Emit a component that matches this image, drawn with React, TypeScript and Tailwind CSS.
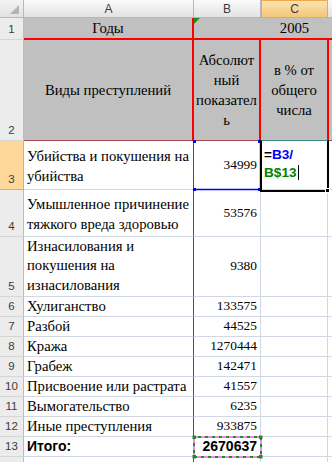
import React from "react";

const serif = "font-['Liberation_Serif','Times_New_Roman',serif]";
const sans = "font-['Liberation_Sans',Arial,sans-serif]";

const grid = "border-r border-b border-r-[#d0d7e5] border-b-[#d0d7e5]";
const rowHead =
  "flex items-end justify-center pb-[2px] bg-[#ececec] border-r border-b border-r-[#bcbcbc] border-b-[#d6d6d6] text-[11.5px] leading-[16px] text-[#3c3c3c] font-['Liberation_Sans',Arial,sans-serif]";
const colHead =
  "flex items-center justify-center bg-gradient-to-b from-[#fafafa] to-[#e3e3e3] border-r border-b border-r-[#b7b7b7] border-b-[#b7b7b7] text-[12px] text-[#3c3c3c] font-['Liberation_Sans',Arial,sans-serif]";

const simple = [
  { n: 6, a: "Хулиганство", b: "133575" },
  { n: 7, a: "Разбой", b: "44525" },
  { n: 8, a: "Кража", b: "1270444" },
  { n: 9, a: "Грабеж", b: "142471" },
  { n: 10, a: "Присвоение или растрата", b: "41557" },
  { n: 11, a: "Вымогательство", b: "6235" },
  { n: 12, a: "Иные преступления", b: "933875" },
];

export default function App() {
  return (
    <div className="relative w-[332px] h-[462px] overflow-hidden bg-white">
      <div className="grid grid-cols-[24px_170px_67px_67px_1fr] grid-rows-[18px_22px_101px_49px_47px_60px_repeat(8,20px)_1fr] h-full text-black">
        {/* column headers */}
        <div className="relative bg-gradient-to-b from-[#f4f4f4] to-[#e2e2e2] border-r border-b border-[#b7b7b7]">
          <svg className="absolute right-[4px] bottom-[3px]" width="9" height="9" viewBox="0 0 9 9">
            <polygon points="9,0 9,9 0,9" fill="#b4b4b4" />
          </svg>
        </div>
        <div className={colHead}>A</div>
        <div className={colHead}>B</div>
        <div className="flex items-center justify-center bg-gradient-to-b from-[#fbe3b4] to-[#f4c673] border border-[#f0a848] text-[12px] text-[#3c3c3c] font-['Liberation_Sans',Arial,sans-serif]">
          C
        </div>
        <div className="bg-gradient-to-b from-[#fafafa] to-[#e3e3e3] border-b border-[#b7b7b7]" />

        {/* row 1 */}
        <div className={rowHead}>1</div>
        <div className={`flex items-center justify-center bg-[#c0c0c0] border-r-2 border-b-2 border-[#ff0000] text-[14.7px] ${serif}`}>
          Годы
        </div>
        <div className="relative bg-[#c0c0c0] border-b-2 border-[#ff0000]">
          <svg className="absolute left-0 top-0" width="6" height="6" viewBox="0 0 6 6">
            <polygon points="0,0 6,0 0,6" fill="#1e8c1e" />
          </svg>
        </div>
        <div className={`flex items-center justify-center bg-[#c0c0c0] border-b-2 border-[#ff0000] text-[14.7px] ${serif}`}>
          2005
        </div>
        <div className="bg-[#c0c0c0] border-b-2 border-[#ff0000]" />

        {/* row 2 */}
        <div className={rowHead}>2</div>
        <div className={`flex items-center justify-center bg-[#c0c0c0] border-r-2 border-r-[#ff0000] border-b border-b-[#a84848] text-[14.7px] ${serif}`}>
          Виды преступлений
        </div>
        <div className={`flex items-center justify-center text-center bg-[#c0c0c0] border-r-2 border-r-[#ff0000] border-b border-b-[#a84848] text-[14.7px] leading-[20px] ${serif}`}>
          <span>
            Абсолют
            <br />
            ный
            <br />
            показател
            <br />ь
          </span>
        </div>
        <div className={`flex items-center justify-center text-center bg-[#c0c0c0] border-r border-r-[#ff0000] border-b border-b-[#a84848] text-[14.7px] leading-[20px] ${serif}`}>
          <span>
            в % от
            <br />
            общего
            <br />
            числа
          </span>
        </div>
        <div className="bg-[#c0c0c0] border-l border-l-[#ff0000] border-b border-b-[#a84848]" />

        {/* row 3 */}
        <div className="flex items-end justify-center pb-[2px] bg-[#fdd89a] border-r border-b border-[#f0a848] text-[11.5px] leading-[16px] text-[#3c3c3c] font-['Liberation_Sans',Arial,sans-serif]">
          3
        </div>
        <div className={`flex items-end pl-[3px] pb-[3px] border-r border-r-[#555] border-b border-b-[#d0d7e5] text-[14.7px] leading-[20px] whitespace-nowrap ${serif}`}>
          <span>
            Убийства и покушения на
            <br />
            убийства
          </span>
        </div>
        <div className={`flex items-center justify-end pr-[3px] ${grid} text-[13.4px] ${serif}`}>34999</div>
        <div className={`pl-[3px] pt-[5px] ${grid} text-[13.6px] leading-[18px] font-bold ${sans}`}>
          <span>=</span>
          <span className="text-[#0000ff]">B3/</span>
          <br />
          <span className="text-[#008000]">B$13</span>
          <span className="inline-block w-px h-[15px] bg-black align-[-3px] ml-[1px]" />
        </div>
        <div className="border-b border-[#d0d7e5]" />

        {/* row 4 */}
        <div className={rowHead}>4</div>
        <div className={`flex flex-col justify-end pl-[3px] pr-[4px] pb-[2px] border-r border-r-[#555] border-b border-b-[#d0d7e5] text-[14.7px] leading-[20px] whitespace-nowrap ${serif}`}>
          <div className="flex justify-between">
            <span>Умышленное</span>
            <span>причинение</span>
          </div>
          <div>тяжкого вреда здоровью</div>
        </div>
        <div className={`flex items-center justify-end pr-[3px] ${grid} text-[13.4px] ${serif}`}>53576</div>
        <div className={grid} />
        <div className="border-b border-[#d0d7e5]" />

        {/* row 5 */}
        <div className={rowHead}>5</div>
        <div className={`flex items-end pl-[3px] pb-[1px] border-r border-r-[#555] border-b border-b-[#d0d7e5] text-[14.7px] leading-[19.5px] whitespace-nowrap ${serif}`}>
          <span>
            Изнасилования и
            <br />
            покушения на
            <br />
            изнасилования
          </span>
        </div>
        <div className={`flex items-center justify-end pr-[3px] ${grid} text-[13.4px] ${serif}`}>9380</div>
        <div className={grid} />
        <div className="border-b border-[#d0d7e5]" />

        {simple.map((r) => (
          <React.Fragment key={r.n}>
            <div className={rowHead}>{r.n}</div>
            <div className={`flex items-center pl-[3px] border-r border-r-[#555] border-b border-b-[#d0d7e5] text-[14.7px] whitespace-nowrap ${serif}`}>
              {r.a}
            </div>
            <div className={`flex items-center justify-end pr-[3px] ${grid} text-[13.4px] ${serif}`}>{r.b}</div>
            <div className={grid} />
            <div className="border-b border-[#d0d7e5]" />
          </React.Fragment>
        ))}

        {/* row 13 */}
        <div className={rowHead}>13</div>
        <div className={`flex items-center pl-[3px] border-r border-r-[#555] border-b border-b-[#d0d7e5] text-[14px] font-bold ${sans}`}>
          Итого:
        </div>
        <div className={`flex items-center justify-end pr-[3px] ${grid} text-[14px] font-bold ${sans}`}>2670637</div>
        <div className={grid} />
        <div className="border-b border-[#d0d7e5]" />

        {/* row 14 stub */}
        <div className="bg-[#ececec] border-r border-[#bcbcbc]" />
        <div className="border-r border-[#555]" />
        <div className="border-r border-[#d0d7e5]" />
        <div className="border-r border-[#d0d7e5]" />
        <div />
      </div>

      {/* B3 reference highlight */}
      <svg className="absolute left-[192px] top-[139px]" width="72" height="53" viewBox="0 0 72 53">
        <line x1="2" y1="50.5" x2="67" y2="50.5" stroke="#0000ff" strokeWidth="1.5" />
        <line x1="67.5" y1="2" x2="67.5" y2="51" stroke="#f0e000" strokeWidth="1" />
        <rect x="1" y="1" width="3" height="3" fill="#0000ff" />
        <rect x="66" y="1" width="3" height="3" fill="#0000ff" />
        <rect x="1" y="49" width="3" height="3" fill="#0000ff" />
        <rect x="66" y="49" width="3" height="3" fill="#0000ff" />
      </svg>

      {/* C3 active cell */}
      <div className="absolute left-[260px] top-[140px] w-[69px] h-[52px] border-2 border-black border-t-[#3e8e8e] border-t" />
      <div className="absolute left-[325px] top-[188px] w-[5px] h-[5px] bg-black border border-white" />

      {/* B13 copy marquee */}
      <svg className="absolute left-[192px] top-[435px]" width="71" height="24" viewBox="0 0 71 24">
        <rect x="2" y="2" width="67" height="20" fill="none" stroke="#1e8c1e" strokeWidth="2" />
        <rect x="2" y="2" width="67" height="20" fill="none" stroke="#ee88ee" strokeWidth="2" strokeDasharray="4 3" />
        <rect x="0.5" y="0.5" width="3.5" height="3.5" fill="#1e8c1e" />
        <rect x="67" y="0.5" width="3.5" height="3.5" fill="#1e8c1e" />
        <rect x="0.5" y="20" width="3.5" height="3.5" fill="#1e8c1e" />
        <rect x="67" y="20" width="3.5" height="3.5" fill="#1e8c1e" />
      </svg>
    </div>
  );
}
